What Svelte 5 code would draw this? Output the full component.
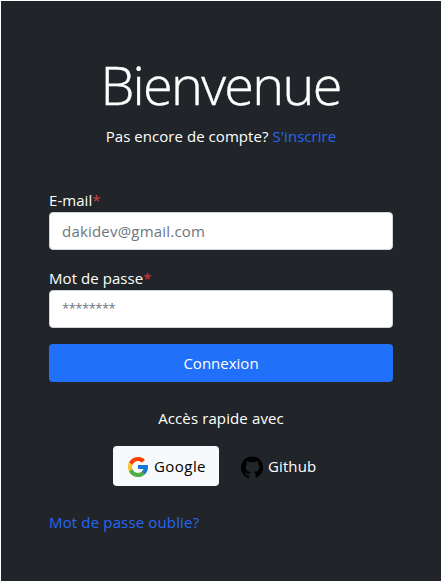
<script>
  let email = $state('');
  let password = $state('');
</script>

<main>
  <h1>Bienvenue</h1>
  <p class="signup">Pas encore de compte? <a href="#signup">S'inscrire</a></p>
  <form onsubmit={(e) => e.preventDefault()}>
    <div class="field">
      <label for="email">E-mail<span>*</span></label>
      <input id="email" type="email" placeholder="dakidev@gmail.com" bind:value={email} />
    </div>
    <div class="field">
      <label for="password">Mot de passe<span>*</span></label>
      <input id="password" type="password" placeholder="********" bind:value={password} />
    </div>
    <button class="submit" type="submit">Connexion</button>
  </form>
  <p class="quick">Accès rapide avec</p>
  <div class="providers">
    <button class="provider light" type="button">
      <svg width="24" height="24" viewBox="0 0 48 48" aria-hidden="true">
        <path fill="#fbc02d" d="M43.6 20H24v8h11.3C33.7 32.7 29.2 36 24 36c-6.600 0-12-5.400-12-12s5.400-12 12-12c3.100 0 5.800 1.200 8 3l5.700-5.600C34 6 29.300 4 24 4 13 4 4 13 4 24s9 20 20 20 20-9 20-20c0-1.300-.1-2.700-.4-4z" />
        <path fill="#ff3d00" d="M6.300 14.700l6.600 4.800C14.700 15.100 19 12 24 12c3.100 0 5.800 1.200 8 3l5.700-5.600C34 6 29.300 4 24 4 16.300 4 9.700 8.300 6.300 14.700z" />
        <path fill="#4caf50" d="M24 44c5.200 0 9.900-2 13.400-5.200l-6.200-5.200C29.200 35.100 26.700 36 24 36c-5.200 0-9.600-3.300-11.300-8l-6.500 5C9.500 39.600 16.200 44 24 44z" />
        <path fill="#1976d2" d="M43.600 20H24v8h11.300c-.8 2.200-2.200 4.200-4.100 5.600l6.200 5.200C37 39.200 44 34 44 24c0-1.300-.1-2.700-.4-4z" />
      </svg>
      <span>Google</span>
    </button>
    <button class="provider" type="button">
      <svg width="24" height="24" viewBox="2 1.500 26 26" aria-hidden="true">
        <path fill="#000" d="M15 3C8.373 3 3 8.373 3 15c0 5.623 3.872 10.328 9.092 11.630-.056-.162-.092-.35-.092-.583v-2.051h-1.508c-.821 0-1.551-.353-1.905-1.009-.393-.729-.461-1.844-1.435-2.526-.289-.227-.069-.486.264-.451.615.174 1.125.596 1.605 1.222.478.627.703.769 1.596.769.433 0 1.081-.025 1.691-.121.328-.833.895-1.600 1.588-1.962-3.996-.411-5.903-2.399-5.903-5.098 0-1.162.495-2.286 1.336-3.233C9.053 10.647 8.706 8.730 9.435 8c1.798 0 2.885 1.166 3.146 1.481A8.993 8.993 0 0 1 15.495 9c1.036 0 2.024.174 2.922.483C18.675 9.170 19.763 8 21.565 8c.732.731.381 2.656.102 3.594.836.945 1.328 2.066 1.328 3.226 0 2.697-1.904 4.684-5.894 5.097C18.199 20.490 19 22.100 19 23.313v2.734c0 .104-.023.179-.035.268C23.641 24.676 27 20.236 27 15 27 8.373 21.627 3 15 3z" />
      </svg>
      <span>Github</span>
    </button>
  </div>
  <a class="forgot" href="#forgot">Mot de passe oublie?</a>
</main>

<style>
  :global(body) { margin: 0; background: #212529; }
  main {
    box-sizing: border-box;
    width: 442px;
    height: 581px;
    padding: 48px 48px 0;
    border: 1px solid #fff;
    border-bottom: 0;
    background: #212529;
    color: #fff;
    font-family: "Open Sans", "Noto Sans", sans-serif;
    font-size: 15px;
    line-height: 24px;
  }
  h1 {
    margin: 2px 0 6px;
    text-align: center;
    font-size: 54px;
    line-height: 67px;
    font-weight: 300;
    letter-spacing: -1.700px;
    text-indent: -1px;
    white-space: nowrap;
    -webkit-text-stroke: 0.400px #fff;
  }
  p { margin: 0; text-align: center; letter-spacing: 0.050px; }
  a { color: #2467f2; text-decoration: none; }
  form { margin-top: 40px; }
  .field { margin-bottom: 16px; }
  label { display: block; height: 24px; letter-spacing: 0.060px; }
  label span { color: #dc3545; }
  input {
    display: block;
    box-sizing: border-box;
    width: 344px;
    height: 38px;
    padding: 6px 12px;
    border: 1px solid #ced4da;
    border-radius: 4px;
    background: #fff;
    color: #212529;
    font: inherit;
    letter-spacing: 0.200px;
  }
  #password { padding: 4px 12px 8px; }
  #password::placeholder { font-size: 13px; letter-spacing: -0.500px; }
  input::placeholder { color: #6c757d; opacity: 1; }
  button { border: 0; padding: 0; font: inherit; color: #fff; }
  .submit {
    display: block;
    width: 344px;
    height: 38px;
    border-radius: 4px;
    background: #2170fa;
  }
  .quick { margin-top: 24px; letter-spacing: 0.120px; }
  .providers { display: flex; gap: 8px; margin: 16px 0 0 64px; }
  .provider {
    display: flex;
    align-items: center;
    gap: 4px;
    height: 40px;
    padding: 0 13px;
    border-radius: 4px;
    background: transparent;
    letter-spacing: 0.100px;
  }
  .provider svg { position: relative; top: 1px; }
  .light { width: 106px; background: #f8f9fa; color: #000; letter-spacing: 0.450px; }
  .forgot { display: block; width: max-content; margin-top: 24px; letter-spacing: 0.150px; }
</style>
